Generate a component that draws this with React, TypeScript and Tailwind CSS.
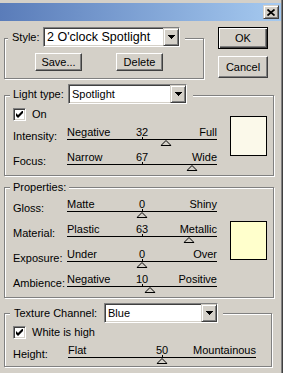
import type { ReactNode } from "react";

// win2000 bevels
const sunken =
  "border border-t-[#808080] border-l-[#808080] border-b-white border-r-white shadow-[inset_1px_1px_0_#404040,inset_-1px_-1px_0_#d4d0c8]";
const raised =
  "border border-t-white border-l-white border-b-[#404040] border-r-[#404040] shadow-[inset_-1px_-1px_0_#808080]";
const comboRaised =
  "border border-t-[#d4d0c8] border-l-[#d4d0c8] border-b-[#404040] border-r-[#404040] shadow-[inset_1px_1px_0_#fff,inset_-1px_-1px_0_#808080]";
const etched = "border border-[#808080] shadow-[inset_1px_1px_0_#fff,1px_1px_0_#fff]";

export default function App() {
  return (
    <div className="flex h-[373px] w-[283px] flex-col overflow-hidden border-r border-r-[#404040] bg-[#d4d0c8] pt-[3px] font-['Liberation_Sans',Arial,sans-serif] text-[11px] leading-[13px] text-black shadow-[inset_-1px_0_0_#808080]">
      <TitleBar />
      <div className="flex flex-col px-[4px]">
        <div className="flex items-start">
          <Group
            className="mt-[17px] w-[200px] pb-[7px]"
            legendClass="-mt-[12px] ml-[3px] pl-[4px] pr-[5px]"
            legend={
              <>
                <span className="w-[31px]">Style:</span>
                <Select value="2 O'clock Spotlight" className="w-[137px]" textClass="text-[12.5px]" />
              </>
            }
          >
            <div className="mt-[6px] flex">
              <Button className="ml-[30px] h-[18px] w-[47px]">Save...</Button>
              <Button className="ml-[34px] h-[18px] w-[47px]">Delete</Button>
            </div>
          </Group>
          <div className="ml-[14px] mt-[6px] flex flex-col gap-[7px]">
            <Button className="h-[22px] w-[50px]" isDefault>
              OK
            </Button>
            <Button className="h-[22px] w-[50px]">Cancel</Button>
          </div>
        </div>

        <Group
          className="mt-[16px] w-[270px] pb-[4px]"
          legendClass="-mt-[12px] ml-[5px] pl-[3px] pr-[6px]"
          legend={
            <>
              <span className="w-[55px]">Light type:</span>
              <Select value="Spotlight" className="w-[119px]" />
            </>
          }
        >
          <div className="flex pl-[8px]">
            <div className="flex flex-col">
              <Checkbox label="On" className="mt-[4px]" />
              <Row label="Intensity:" className="mt-[4px]">
                <Slider left="Negative" right="Full" value={32} min={-100} max={100} className="w-[150px]" />
              </Row>
              <Row label="Focus:" className="mt-[4px]">
                <Slider left="Narrow" right="Wide" value={67} min={-100} max={100} className="w-[150px]" />
              </Row>
            </div>
            <div className="ml-[13px] mt-[12px] h-[40px] w-[37px] border border-black bg-[#fbf9ea]" />
          </div>
        </Group>

        <Group
          className="mt-[11px] w-[270px] pb-[4px]"
          legendClass="-mt-[7px] ml-[5px] px-[3px]"
          legend={<span>Properties:</span>}
        >
          <div className="flex pl-[8px]">
            <div className="flex flex-col">
              <Row label="Gloss:" className="mt-[3px]">
                <Slider left="Matte" right="Shiny" value={0} min={-100} max={100} className="w-[150px]" />
              </Row>
              <Row label="Material:" className="mt-[4px]">
                <Slider left="Plastic" right="Metallic" value={63} min={-100} max={100} className="w-[150px]" />
              </Row>
              <Row label="Exposure:" className="mt-[4px]">
                <Slider left="Under" right="Over" value={0} min={-100} max={100} className="w-[150px]" />
              </Row>
              <Row label="Ambience:" className="mt-[4px]">
                <Slider left="Negative" right="Positive" value={10} min={-100} max={100} className="w-[150px]" />
              </Row>
            </div>
            <div className="ml-[13px] mt-[27px] h-[39px] w-[37px] border border-black bg-[#ffffcc]" />
          </div>
        </Group>

        <Group
          className="mt-[15px] w-[268px] pb-[2px]"
          legendClass="-mt-[11px] ml-[5px] pl-[4px] pr-[5px]"
          legend={
            <>
              <span className="w-[90px]">Texture Channel:</span>
              <Select value="Blue" className="w-[114px]" />
            </>
          }
        >
          <div className="flex flex-col pl-[8px]">
            <Checkbox label="White is high" className="mt-[3px]" />
            <Row label="Height:" labelClass="w-[55px]" className="mt-[4px]">
              <Slider left="Flat" right="Mountainous" value={50} min={0} max={100} className="w-[188px]" />
            </Row>
          </div>
        </Group>
      </div>
    </div>
  );
}

function TitleBar() {
  return (
    <div className="mr-[1px] flex h-[18px] shrink-0 items-center justify-end bg-linear-to-r from-[#5a7cb9] to-[#a6caf0] pr-[2px]">
      <div className={`flex h-[14px] w-[16px] items-center justify-center bg-[#d4d0c8] ${comboRaised}`}>
        <svg width="8" height="7" viewBox="0 0 8 7">
          <path d="M0.5 0.5L7.5 6.5M7.5 0.5L0.5 6.5" stroke="black" strokeWidth="1.7" />
        </svg>
      </div>
    </div>
  );
}

function Group({
  legend,
  legendClass,
  className,
  children,
}: {
  legend: ReactNode;
  legendClass: string;
  className: string;
  children: ReactNode;
}) {
  return (
    <div className={`${etched} ${className}`}>
      <div className={`flex w-fit items-center bg-[#d4d0c8] ${legendClass}`}>{legend}</div>
      {children}
    </div>
  );
}

function Select({ value, className, textClass = "" }: { value: string; className: string; textClass?: string }) {
  return (
    <div className={`flex h-[20px] bg-white ${sunken} ${className}`}>
      <div className={`flex flex-1 items-center pl-[3px] ${textClass}`}>{value}</div>
      <div className={`flex w-[16px] items-center justify-center bg-[#d4d0c8] ${comboRaised}`}>
        <svg width="7" height="4" viewBox="0 0 7 4">
          <path d="M0 0h7v1h-1v1h-1v1h-1v1h-1v-1h-1v-1h-1v-1h-1z" fill="black" />
        </svg>
      </div>
    </div>
  );
}

function Button({ children, className, isDefault }: { children: ReactNode; className: string; isDefault?: boolean }) {
  const bevel = isDefault
    ? "border border-black shadow-[inset_1px_1px_0_#fff,inset_-1px_-1px_0_#404040,inset_-2px_-2px_0_#808080]"
    : raised;
  return <div className={`flex items-center justify-center bg-[#d4d0c8] ${bevel} ${className}`}>{children}</div>;
}

function Checkbox({ label, className }: { label: string; className: string }) {
  return (
    <div className={`flex h-[13px] items-center ${className}`}>
      <div className={`flex h-[13px] w-[13px] items-center justify-center bg-white ${sunken}`}>
        <svg width="7" height="7" viewBox="0 0 7 7">
          <polygon points="0,2 2,4 7,-1 7,2 2,7 0,5" fill="black" />
        </svg>
      </div>
      <span className="ml-[6px]">{label}</span>
    </div>
  );
}

function Row({
  label,
  labelClass = "w-[54px]",
  className,
  children,
}: {
  label: string;
  labelClass?: string;
  className: string;
  children: ReactNode;
}) {
  return (
    <div className={`flex ${className}`}>
      <span className={`pt-[5px] ${labelClass}`}>{label}</span>
      {children}
    </div>
  );
}

function Slider({
  left,
  right,
  value,
  min,
  max,
  className,
}: {
  left: string;
  right: string;
  value: number;
  min: number;
  max: number;
  className: string;
}) {
  const pct = ((value - min) / (max - min)) * 100;
  return (
    <div className={className}>
      <div className="grid h-[14px] grid-cols-[minmax(0,1fr)_auto_minmax(0,1fr)] items-end whitespace-nowrap">
        <span>{left}</span>
        <span>{value}</span>
        <span className="text-right">{right}</span>
      </div>
      <div className="relative h-px bg-black">
        <div className="absolute bottom-[1px] left-1/2 h-[2px] w-px bg-black" />
      </div>
      <div className="relative h-[6px]">
        <svg
          className="absolute top-0 -translate-x-1/2"
          style={{ left: `${pct}%` }}
          width="11"
          height="6"
          viewBox="0 0 11 6"
        >
          <polygon points="0.5,5.5 5.5,0.5 10.5,5.5" fill="#d4d0c8" stroke="black" strokeWidth="1" />
        </svg>
      </div>
    </div>
  );
}
